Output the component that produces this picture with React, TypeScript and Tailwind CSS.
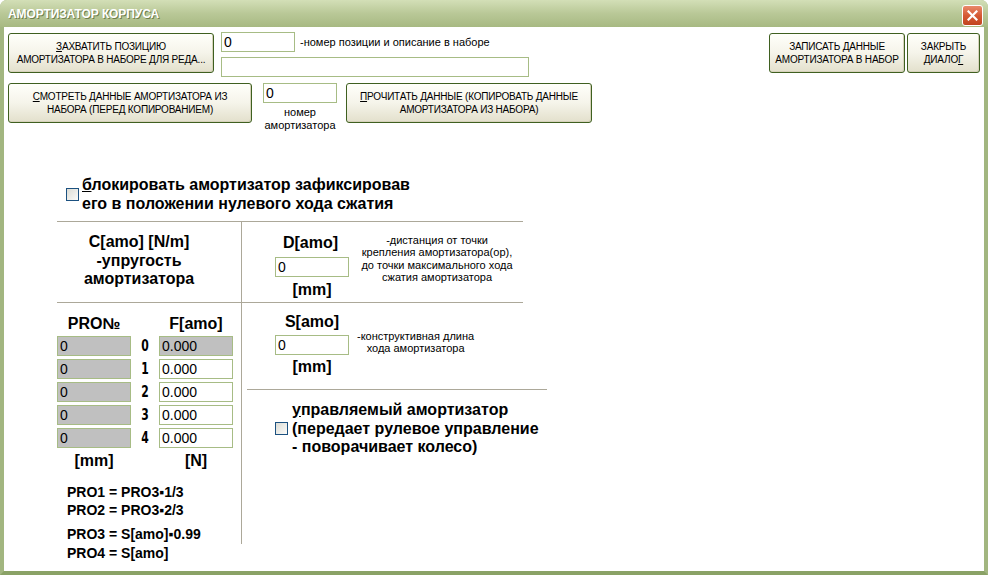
import React from "react";

const SANS = { fontFamily: '"Liberation Sans", Arial, sans-serif' };

function XPButton({
  className = "",
  children,
}: {
  className?: string;
  children: React.ReactNode;
}) {
  return (
    <div
      className={`flex flex-col items-center justify-center whitespace-nowrap rounded-[3px] border border-[#3f6020] bg-gradient-to-b from-[#fffffa] via-[#f5f4ea] to-[#e3e0cc] text-[10px] leading-[13px] tracking-[-0.2px] text-black shadow-[inset_-1px_-1px_0_#d6d2bb] ${className}`}
      style={SANS}
    >
      {children}
    </div>
  );
}

function Input({
  className = "",
  value = "",
  grey = false,
}: {
  className?: string;
  value?: string;
  grey?: boolean;
}) {
  return (
    <div
      className={`flex h-[20px] items-center border border-[#a7bc85] pl-[2px] text-[14px] font-normal leading-[18px] text-black ${
        grey ? "bg-[#c0c0c0]" : "bg-white"
      } ${className}`}
      style={SANS}
    >
      {value}
    </div>
  );
}

function Check() {
  return (
    <div className="h-[13px] w-[13px] shrink-0 border border-[#1c5180] bg-gradient-to-br from-[#dcdcd5] to-[#fbfbf9]" />
  );
}

export default function App() {
  const rows = [0, 1, 2, 3, 4];
  return (
    <div className="h-[575px] w-[988px] bg-white" style={SANS}>
      <div className="flex h-[575px] w-[988px] flex-col overflow-hidden rounded-t-[7px] bg-[#9fb47c]">
        {/* Title bar */}
        <div className="flex h-[27px] shrink-0 items-center justify-between bg-gradient-to-b from-[#d3dfb7] via-[#b9c897] to-[#a7b982] pl-[8px] pr-[5px]">
          <span
            className="text-[12px] font-bold tracking-[-0.1px] text-white [text-shadow:1px_1px_0_#6e7f4e]"
            style={SANS}
          >
            АМОРТИЗАТОР КОРПУСА
          </span>
          <div className="mt-[3px] flex h-[21px] w-[21px] items-center justify-center rounded-[3px] border border-white bg-gradient-to-b from-[#e9896a] via-[#d55a35] to-[#c2441f]">
            <svg width="11" height="11" viewBox="0 0 11 11">
              <path
                d="M1.5 1.5 L9.5 9.5 M9.5 1.5 L1.5 9.5"
                stroke="white"
                strokeWidth="2.2"
                strokeLinecap="square"
              />
            </svg>
          </div>
        </div>

        {/* Body */}
        <div className="flex flex-1 flex-col border-x-[4px] border-b-[4px] border-x-[#a2b680] border-b-[#8aa266] bg-white">
          {/* Row 1 */}
          <div className="flex items-start pl-[4px] pr-[4px] pt-[5px]">
            <XPButton className="mt-[1px] h-[40px] w-[206px]">
              <span>
                <u>З</u>АХВАТИТЬ ПОЗИЦИЮ
              </span>
              <span>АМОРТИЗАТОРА В НАБОРЕ ДЛЯ РЕДА...</span>
            </XPButton>
            <div className="ml-[7px] flex flex-col">
              <div className="flex items-start">
                <Input className="w-[74px]" value="0" />
                <span className="ml-[5px] mt-[4px] text-[11px] leading-[13px]">
                  -номер позиции и описание в наборе
                </span>
              </div>
              <Input className="mt-[5px] w-[308px]" />
            </div>
            <XPButton className="ml-auto mt-[1px] h-[40px] w-[136px]">
              <span>
                ЗАПИСАТЬ <u>Д</u>АННЫЕ
              </span>
              <span>АМОРТИЗАТОРА В НАБОР</span>
            </XPButton>
            <XPButton className="ml-[2px] mt-[1px] h-[40px] w-[73px]">
              <span>ЗАКРЫТЬ</span>
              <span>
                ДИАЛО<u>Г</u>
              </span>
            </XPButton>
          </div>

          {/* Row 2 */}
          <div className="mt-[6px] flex items-start pl-[4px]">
            <XPButton className="h-[40px] w-[244px]">
              <span>
                <u>С</u>МОТРЕТЬ ДАННЫЕ АМОРТИЗАТОРА ИЗ
              </span>
              <span>НАБОРА (ПЕРЕД КОПИРОВАНИЕМ)</span>
            </XPButton>
            <div className="ml-[11px] flex w-[74px] flex-col items-center">
              <Input className="w-[74px]" value="0" />
              <span className="mt-[3px] text-center text-[11px] leading-[13px]">
                номер
                <br />
                амортизатора
              </span>
            </div>
            <XPButton className="ml-[9px] h-[40px] w-[246px]">
              <span>
                <u>П</u>РОЧИТАТЬ ДАННЫЕ (КОПИРОВАТЬ ДАННЫЕ
              </span>
              <span>АМОРТИЗАТОРА ИЗ НАБОРА)</span>
            </XPButton>
          </div>

          {/* Lock checkbox */}
          <div className="ml-[62px] mt-[43px] flex items-center">
            <Check />
            <div className="ml-[3px] text-[16px] font-bold leading-[19px]">
              <u>б</u>локировать амортизатор зафиксировав
              <br />
              его в положении нулевого хода сжатия
            </div>
          </div>

          <div className="ml-[53px] mt-[8px] h-px w-[466px] bg-[#aca899]" />

          {/* Main grid */}
          <div className="ml-[53px] flex">
            {/* Left column */}
            <div className="flex w-[184px] flex-col">
              <div className="flex h-[80px] flex-col items-center pr-[20px] pt-[11px] text-[16px] font-bold leading-[18.5px]">
                <span>C[amo] [N/m]</span>
                <span>-упругость</span>
                <span>амортизатора</span>
              </div>
              <div className="h-px w-full bg-[#aca899]" />
              <div className="flex flex-col pt-[11px]">
                <div className="flex text-[16px] font-bold leading-[20px]">
                  <span className="w-[74px] text-center">PRO№</span>
                  <span className="ml-[28px] w-[74px] text-center">
                    F[amo]
                  </span>
                </div>
                <div className="mt-[2px] flex flex-col gap-[3px]">
                  {rows.map((r) => (
                    <div key={r} className="flex h-[20px] items-center">
                      <Input className="w-[74px]" value="0" grey />
                      <span
                        className="w-[28px] scale-x-[0.8] text-center text-[15px] font-black leading-[20px]"
                        style={{
                          fontFamily:
                            '"DejaVu Sans Condensed", "Liberation Sans Narrow", "Liberation Sans", sans-serif',
                        }}
                      >
                        {r}
                      </span>
                      <Input
                        className="w-[74px]"
                        value="0.000"
                        grey={r === 0}
                      />
                    </div>
                  ))}
                </div>
                <div className="mt-[3px] flex text-[16px] font-bold leading-[20px]">
                  <span className="w-[74px] text-center">[mm]</span>
                  <span className="ml-[28px] w-[74px] text-center">[N]</span>
                </div>
                <div className="ml-[10px] mt-[12px] text-[14px] font-bold leading-[18px]">
                  <div>PRO1 = PRO3▪1/3</div>
                  <div>PRO2 = PRO3▪2/3</div>
                  <div className="mt-[6px]">PRO3 = S[amo]▪0.99</div>
                  <div className="mt-[1px]">PRO4 = S[amo]</div>
                </div>
              </div>
            </div>

            {/* Vertical divider */}
            <div className="h-[322px] w-px bg-[#aca899]" />

            {/* Right column */}
            <div className="flex w-[305px] flex-col">
              <div className="flex h-[80px] items-start">
                <div className="ml-[33px] flex w-[74px] flex-col items-center pt-[11px] text-[16px] font-bold">
                  <span className="-ml-[3px] leading-[20px]">D[amo]</span>
                  <Input className="mt-[4px] w-[74px]" value="0" />
                  <span className="mt-[3px] leading-[20px]">[mm]</span>
                </div>
                <div className="ml-[8px] w-[160px] pt-[12px] text-center text-[11px] leading-[12.4px]">
                  -дистанция от точки
                  <br />
                  крепления амортизатора(ор),
                  <br />
                  до точки максимального хода
                  <br />
                  сжатия амортизатора
                </div>
              </div>
              <div className="h-px w-[281px] bg-[#aca899]" />
              <div className="flex h-[86px] items-start">
                <div className="ml-[33px] flex w-[74px] flex-col items-center pt-[9px] text-[16px] font-bold">
                  <span className="leading-[20px]">S[amo]</span>
                  <Input className="mt-[3px] w-[74px]" value="0" />
                  <span className="mt-[2px] leading-[20px]">[mm]</span>
                </div>
                <div className="ml-[8px] pt-[27px] text-center text-[11px] leading-[12px]">
                  -конструктивная длина
                  <br />
                  хода амортизатора
                </div>
              </div>
              <div className="ml-[5px] h-px w-[300px] bg-[#aca899]" />
              <div className="ml-[33px] mt-[11px] flex items-center">
                <Check />
                <div className="ml-[4px] text-[16px] font-bold leading-[18.5px]">
                  <u>у</u>правляемый амортизатор
                  <br />
                  (передает рулевое управление
                  <br />- поворачивает колесо)
                </div>
              </div>
            </div>
          </div>
        </div>
      </div>
    </div>
  );
}
